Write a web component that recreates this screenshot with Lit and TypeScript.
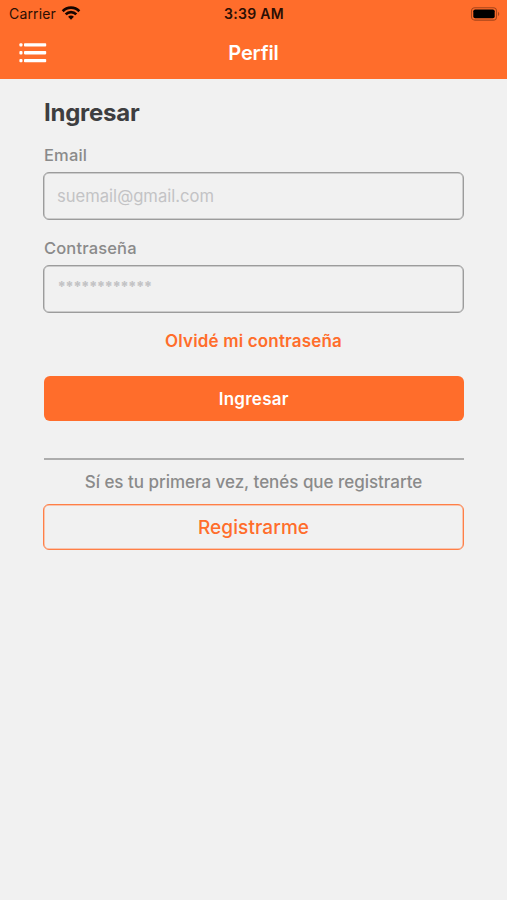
import { LitElement, html, css } from "lit";
import { customElement } from "lit/decorators.js";

@customElement("app-root")
class AppRoot extends LitElement {
  static styles = css`
    :host { display: block; height: 900px; background: #f1f1f1; font-family: Inter, "Liberation Sans", sans-serif; overflow: hidden; }
    * { box-sizing: border-box; }
    .top { height: 79px; background: #ff6d2b; }
    .status { height: 27px; display: grid; grid-template-columns: 1fr auto 1fr; align-items: center; padding: 0 7px 0 9px; color: #2b0f04; }
    .carrier { display: flex; align-items: center; gap: 5px; font-size: 14px; letter-spacing: 0.15px; }
    .time { font-size: 14px; font-weight: 600; letter-spacing: 0.3px; margin-left: -1px; }
    .battery { justify-self: end; }
    .nav { height: 52px; display: grid; grid-template-columns: 1fr auto 1fr; align-items: center; padding: 0 19px; color: #fff; }
    .title { font-size: 20px; font-weight: 600; letter-spacing: -0.15px; }
    svg { display: block; }
    .form { padding: 0 43px; display: flex; flex-direction: column; }
    h1 { margin: 19px 0 0 1px; font-size: 24px; line-height: 30px; font-weight: 650; letter-spacing: -0.25px; color: #3e3e40; }
    .label { margin-left: 1px; font-size: 16.5px; line-height: 20px; color: #8a8a8a; font-weight: 500; letter-spacing: 0.15px; }
    .email { margin-top: 17px; }
    .pass { margin-top: 18px; }
    .input { height: 48px; margin-top: 7px; border: 1px solid #9c9c9c; box-shadow: inset 0 0 0 0.5px #a8a8a8; border-radius: 6px; padding: 0 13px; display: flex; align-items: center; font-size: 16.6px; color: #c3c3c5; }
    .mask { font-size: 14.5px; font-weight: 800; letter-spacing: -0.6px; padding: 0 0 5px 0.5px; }
    .forgot { margin-top: 18px; line-height: 20px; font-size: 17px; font-weight: 600; letter-spacing: 0.17px; color: #ff6d2b; text-align: center; }
    .primary { margin: 25px 0 0 0.5px; height: 45px; border-radius: 6px; background: #ff6d2b; color: #fff; font-size: 17px; font-weight: 600; letter-spacing: 0.25px; display: flex; align-items: center; justify-content: center; }
    .rule { margin: 37px 0 0 1px; height: 2px; background: #adadad; }
    .hint { margin-top: 12px; line-height: 20px; font-size: 17px; font-weight: 500; letter-spacing: -0.03px; color: #8a8a8a; text-align: center; white-space: nowrap; }
    .secondary { margin-top: 12px; height: 46px; border: 1px solid #ff7f47; box-shadow: inset 0 0 0 0.5px #ff9a6e; border-radius: 6px; color: #ff6d2b; font-size: 19px; font-weight: 500; letter-spacing: 0.1px; display: flex; align-items: center; justify-content: center; }
  `;

  render() {
    return html`
      <header class="top">
        <div class="status">
          <div class="carrier">
            <span>Carrier</span>
            <svg width="20" height="15" viewBox="0 0 20 15" fill="none" stroke="#160500" stroke-width="2.7">
              <path d="M1.7 5.2C6.2 0.5 13.8 0.5 18.3 5.2" />
              <path d="M4.7 8.4C7.6 5.4 12.4 5.4 15.3 8.4" />
              <path d="M7.1 10.7C8.7 9.2 11.3 9.2 12.9 10.7L10 13.8Z" fill="#160500" stroke="none" />
            </svg>
          </div>
          <span class="time">3:39 AM</span>
          <svg class="battery" width="30" height="14" viewBox="0 0 30 14">
            <rect x="1.5" y="0.7" width="25" height="12.4" rx="3.4" fill="none" stroke="#a8451b" stroke-width="1.1" />
            <rect x="3.3" y="2.5" width="21.4" height="8.8" rx="1.8" fill="#000" />
            <path d="M28 4.7C29.7 5.4 29.7 8.4 28 9.1Z" fill="#a8451b" />
          </svg>
        </div>
        <div class="nav">
          <svg width="28" height="22" viewBox="0 0 28 22" fill="#fff">
            <rect x="0.4" y="1.2" width="3.1" height="3.4" rx="1" />
            <rect x="5" y="1.2" width="22.2" height="3.4" rx="0.8" />
            <rect x="0.4" y="9" width="3.1" height="3.4" rx="1" />
            <rect x="5" y="9" width="22.2" height="3.4" rx="0.8" />
            <rect x="0.4" y="16.9" width="3.1" height="3.4" rx="1" />
            <rect x="5" y="16.9" width="22.2" height="3.4" rx="0.8" />
          </svg>
          <span class="title">Perfil</span>
        </div>
      </header>
      <main class="form">
        <h1>Ingresar</h1>
        <span class="label email">Email</span>
        <div class="input"><span>suemail@gmail.com</span></div>
        <span class="label pass">Contraseña</span>
        <div class="input"><span class="mask">************</span></div>
        <span class="forgot">Olvidé mi contraseña</span>
        <div class="primary"><span>Ingresar</span></div>
        <div class="rule"></div>
        <span class="hint">Sí es tu primera vez, tenés que registrarte</span>
        <div class="secondary"><span>Registrarme</span></div>
      </main>`;
  }
}
